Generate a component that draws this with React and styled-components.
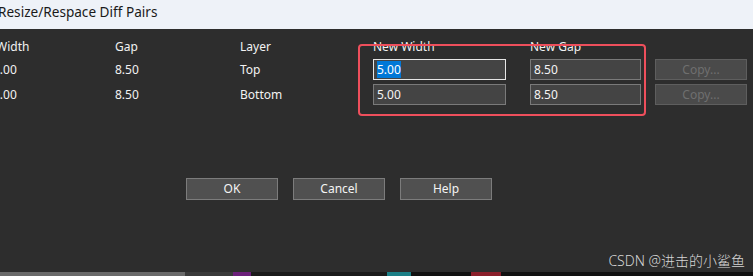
import React from "react";
import styled, { createGlobalStyle } from "styled-components";

const GlobalStyle = createGlobalStyle`
  html, body {
    margin: 0;
    padding: 0;
    width: 753px;
    height: 276px;
    overflow: hidden;
    background: #2d2d2d;
  }
  #root {
    height: 276px;
  }
`;

const rows = [
  { width: "5.00", gap: "8.50", layer: "Top", newWidth: "5.00", newGap: "8.50", focused: true },
  { width: "5.00", gap: "8.50", layer: "Bottom", newWidth: "5.00", newGap: "8.50" },
];

const App = () => {
  return (
    <>
      <GlobalStyle />
      <Window>
        <TitleBar>Resize/Respace Diff Pairs</TitleBar>
        <Body>
          <Table>
            <Label $shift={-4}>Width</Label>
            <Label>Gap</Label>
            <Label>Layer</Label>
            <Label>New Width</Label>
            <Label>New Gap</Label>
            <span />
            {rows.map((r, i) => (
              <React.Fragment key={i}>
                <Value $shift={-7}>{r.width}</Value>
                <Value>{r.gap}</Value>
                <Value>{r.layer}</Value>
                <Field $focused={r.focused} $w={133}>
                  {r.focused ? <Selected>{r.newWidth}</Selected> : r.newWidth}
                </Field>
                <Field $w={111}>{r.newGap}</Field>
                <CopyButton>Copy...</CopyButton>
              </React.Fragment>
            ))}
            <Highlight />
          </Table>
          <Actions>
            <Button>OK</Button>
            <Button>Cancel</Button>
            <Button>Help</Button>
          </Actions>
          <Footer>
            <Watermark>CSDN @进击的小鲨鱼</Watermark>
          </Footer>
        </Body>
        <Strip>
          <StripPart $c="#6a6a6a" $w={185} />
          <StripPart $c="#3a3a3a" $w={48} />
          <StripPart $c="#6b1f7a" $w={18} />
          <StripPart $c="#1a1a1a" $w={136} />
          <StripPart $c="#1b7f86" $w={24} />
          <StripPart $c="#111" $w={60} />
          <StripPart $c="#8a1f2a" $w={30} />
          <StripPart $c="#111" $w={252} />
        </Strip>
      </Window>
    </>
  );
};

export default App;

const Window = styled.div`
  display: flex;
  flex-direction: column;
  height: 276px;
  font-family: "Noto Sans", "Open Sans", sans-serif;
  font-size: 12px;
  color: #f2f2f2;
`;

const TitleBar = styled.div`
  height: 29px;
  flex-shrink: 0;
  background: #eef2f8;
  color: #1a1a1a;
  font-size: 13.6px;
  line-height: 23px;
  margin-left: -2px;
  white-space: nowrap;
`;

const Body = styled.div`
  flex: 1;
  display: flex;
  flex-direction: column;
  padding-top: 10px;
  background: #2d2d2d;
`;

const Table = styled.div`
  position: relative;
  display: grid;
  grid-template-columns: 119px 125px 133px 157px 125px 92px;
  grid-template-rows: 16px 21px 21px;
  row-gap: 4px;
  margin-left: -4px;
`;

const Label = styled.div`
  line-height: 16px;
  white-space: nowrap;
  margin-left: ${(p) => (p.$shift ? p.$shift + 4 : 0)}px;
`;

const Value = styled.div`
  line-height: 21px;
  white-space: nowrap;
  margin-left: ${(p) => (p.$shift ? p.$shift + 4 : 0)}px;
`;

const Field = styled.div`
  box-sizing: border-box;
  width: ${(p) => p.$w}px;
  height: 21px;
  background: #444444;
  border: 1px solid ${(p) => (p.$focused ? "#e6e6e6" : "#7a7a7a")};
  padding-left: 3px;
  line-height: 19px;
  color: #f4f4f4;
`;

const Selected = styled.span`
  background: #0078d7;
  color: #fff;
  display: inline-block;
  line-height: 17px;
`;

const CopyButton = styled.div`
  box-sizing: border-box;
  width: 92px;
  height: 21px;
  background: #4a4a4a;
  border: 1px solid #5e5e5e;
  color: #6f6f6f;
  text-align: center;
  line-height: 19px;
`;

const Highlight = styled.div`
  position: absolute;
  left: 362px;
  top: 5px;
  width: 288px;
  height: 72px;
  box-sizing: border-box;
  border: 2px solid #ee4f5c;
  border-radius: 4px;
  pointer-events: none;
`;

const Actions = styled.div`
  display: flex;
  gap: 15px;
  margin-top: 73px;
  padding-left: 186px;
`;

const Button = styled.div`
  box-sizing: border-box;
  width: 92px;
  height: 22px;
  background: #505050;
  border: 1px solid #7c7c7c;
  color: #f4f4f4;
  text-align: center;
  line-height: 20px;
`;

const Footer = styled.div`
  flex: 1;
  display: flex;
  justify-content: flex-end;
  align-items: flex-end;
  padding-right: 8px;
`;

const Watermark = styled.div`
  font-family: "Noto Sans", "Noto Sans CJK SC", sans-serif;
  font-size: 14px;
  color: #d6d6d6;
  line-height: 20px;
  margin-bottom: 1px;
  font-weight: 300;
`;

const Strip = styled.div`
  display: flex;
  height: 4px;
  flex-shrink: 0;
  background: #111;
`;

const StripPart = styled.div`
  width: ${(p) => p.$w}px;
  background: ${(p) => p.$c};
`;
